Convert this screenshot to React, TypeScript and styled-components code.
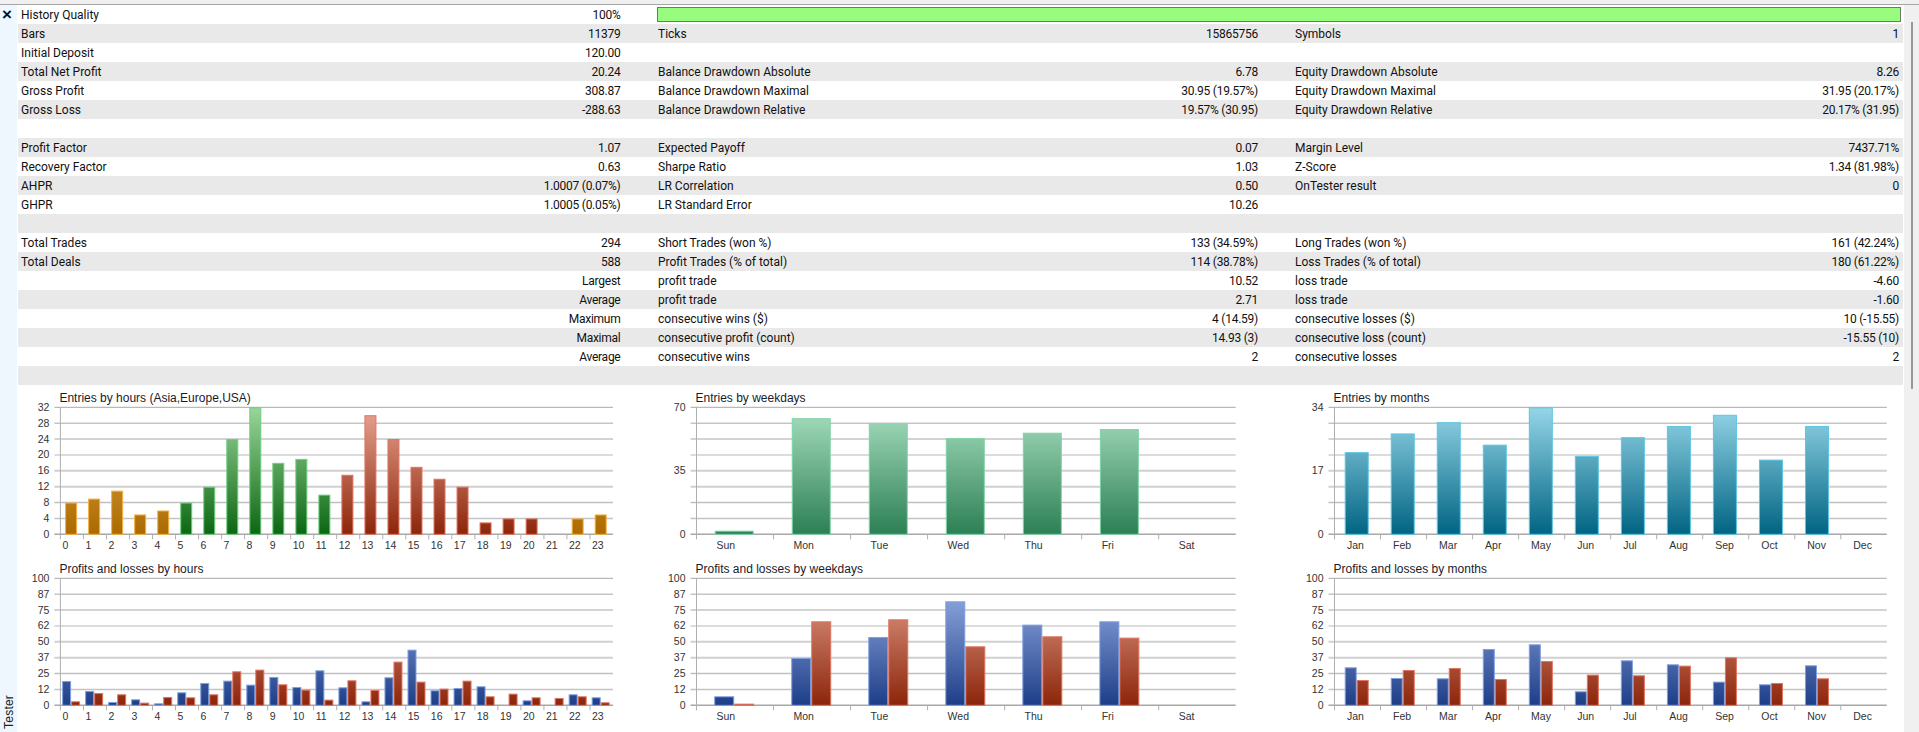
import React from "react";
import styled, { createGlobalStyle } from "styled-components";

const Global = createGlobalStyle`
  html, body { margin: 0; padding: 0; background: #fff; overflow: hidden; }
  #root { width: 1919px; height: 732px; overflow: hidden; }
`;

const Page = styled.div`
  display: flex;
  flex-direction: column;
  width: 1919px;
  height: 732px;
  overflow: hidden;
  background: #fff;
`;
const TopStrip = styled.div`
  flex: none;
  height: 4px;
  background: #f0f0f0;
  border-bottom: 1px solid #a6a6a6;
`;
const Main = styled.div`
  flex: 1;
  min-height: 0;
  display: flex;
`;
const Sidebar = styled.aside`
  flex: none;
  width: 17px;
  margin-right: 1px;
  background: #eef6fe;
  display: flex;
  flex-direction: column;
  justify-content: space-between;
  align-items: flex-start;
  padding: 3px 0 3px 0;
  box-sizing: border-box;
`;
const CloseMark = styled.span`
  font: bold 17px/14px "Liberation Sans", sans-serif;
  color: #111;
  margin-left: 2px;
`;
const SideLabel = styled.span`
  writing-mode: vertical-rl;
  transform: rotate(180deg);
  font: 12px/14px "Liberation Sans", sans-serif;
  color: #222;
  letter-spacing: 0.2px;
  margin-left: 2px;
`;
const Content = styled.main`
  flex: none;
  width: 1886px;
  display: flex;
  flex-direction: column;
`;
const Track = styled.div`
  flex: none;
  width: 15px;
  background: #f0f0f0;
  padding: 17px 0 0 7px;
  box-sizing: border-box;
`;
const Thumb = styled.div`
  width: 2px;
  height: 367px;
  background: #979797;
`;
const Table = styled.div`
  flex: none;
  width: 1885px;
`;
const Row = styled.div<{ $shade?: boolean }>`
  display: grid;
  grid-template-columns: 640px 637px 608px;
  height: 19px;
  background: ${(p) => (p.$shade ? "#e9e9e9" : "#fff")};
  font: 12px/21px Roboto, "Liberation Sans", sans-serif;
  color: #111;
`;
const Cell = styled.div<{ $left: number; $right: number }>`
  display: flex;
  justify-content: space-between;
  height: 19px;
  padding: 0 ${(p) => p.$right}px 0 ${(p) => p.$left}px;
  white-space: nowrap;
`;
const Value = styled.span`
  letter-spacing: -0.25px;
`;
const Quality = styled.div`
  grid-column: 2 / 4;
  height: 15px;
  margin: 2px 2px 0 -1px;
  box-sizing: border-box;
  background: #98fd7e;
  border: 1px solid #6b7a6b;
`;
const Charts = styled.div`
  flex: none;
  display: grid;
  grid-template-columns: 639px 638px 608px;
  grid-template-rows: 171px 176px;
`;
const Card = styled.section`
  padding-top: 6px;
  min-width: 0;
`;
const ChartTitle = styled.div<{ $x: number }>`
  padding-left: ${(p) => p.$x}px;
  font: 12px/14px "Liberation Sans", sans-serif;
  color: #1a1a2a;
  white-space: nowrap;
`;
const Plot = styled.svg`
  display: block;
  width: 100%;
  height: 151px;
  overflow: visible;
`;
const AxisText = styled.text`
  font: 10.5px "Liberation Sans", sans-serif;
  fill: #333;
`;

type C = [string, string];
const col: Record<string, C> = {
  orange: ["#e8b25a", "#ab6a00"],
  green: ["#9ad69a", "#0c6612"],
  red: ["#e8a593", "#8c250a"],
  blue: ["#9db4e8", "#1d3e88"],
  mint: ["#a8dfc0", "#2c7f54"],
  teal: ["#96d6e8", "#006483"],
};
const edge: Record<string, string> = {
  orange: "#f5b043",
  green: "#6fce7f",
  red: "#e27360",
  blue: "#7f9fe2",
  mint: "#80d4a6",
  teal: "#5cc6e2",
};

const gridStyles: [string, number][] = [
  ["#a8a8a8", 1],
  ["#a8a8a8", 1],
  ["#c4c4c4", 1.5],
  ["#dcdcdc", 2],
  ["#d0d0d0", 2],
  ["#d0d0d0", 2],
  ["#c0c0c0", 1.5],
  ["#c4c4c4", 1.5],
  ["#a8a8a8", 1.5],
];

const H = 127;
const TOP = 2.3;

type Bar = { v: number; c: string };
type ChartProps = {
  id: string;
  title: string;
  axis: number;
  width: number;
  yLabels: string[];
  xLabels: string[];
  labelOffset: number;
  barW: number;
  max: number;
  groups: Bar[][];
};

function Chart({ id, title, axis, width, yLabels, xLabels, labelOffset, barW, max, groups }: ChartProps) {
  const slot = width / xLabels.length;
  const bottom = TOP + H;
  const step = yLabels.length > 1 ? 8 / (yLabels.length - 1) : 1;
  const used = Array.from(new Set(groups.flat().map((b) => b.c)));
  return (
    <Card>
      <ChartTitle $x={axis - 1}>{title}</ChartTitle>
      <Plot>
        <defs>
          {used.map((c) => (
            <linearGradient key={c} id={`${id}-${c}`} gradientUnits="userSpaceOnUse" x1="0" x2="0" y1={TOP} y2={bottom}>
              <stop offset="0" stopColor={col[c][0]} />
              <stop offset="1" stopColor={col[c][1]} />
            </linearGradient>
          ))}
        </defs>
        {gridStyles.map(([stroke, w], i) => {
          const y = TOP + (H / 8) * i;
          return <line key={i} x1={axis - 6} x2={axis + width} y1={y} y2={y} stroke={stroke} strokeWidth={w} />;
        })}
        <line x1={axis} x2={axis} y1={TOP} y2={bottom + 5} stroke="#b0b0b0" />
        {xLabels.map((l, i) => (
          <g key={l}>
            {i > 0 && <line x1={axis + slot * i} x2={axis + slot * i} y1={bottom} y2={bottom + 5} stroke="#b0b0b0" />}
            <AxisText x={axis + slot * i + labelOffset} y={bottom + 14.5}>
              {l}
            </AxisText>
          </g>
        ))}
        {yLabels.map((l, i) => (
          <AxisText key={l} x={axis - 11} y={TOP + (H / 8) * i * step + 3.5} textAnchor="end">
            {l}
          </AxisText>
        ))}
        {groups.map((g, i) => {
          const total = g.length * barW;
          const start = axis + slot * i + slot / 2 - total / 2 - 0.8;
          return g.map((b, j) => {
            if (b.v <= 0) return null;
            const h = (b.v / max) * H;
            return (
              <rect
                key={j}
                x={start + j * barW + 0.5}
                y={bottom - h + 0.5}
                width={barW - 1}
                height={Math.max(h - 0.5, 0.5)}
                fill={`url(#${id}-${b.c})`}
                stroke={edge[b.c]}
              />
            );
          });
        })}
      </Plot>
    </Card>
  );
}

const hours = Array.from({ length: 24 }, (_, i) => String(i));
const days = ["Sun", "Mon", "Tue", "Wed", "Thu", "Fri", "Sat"];
const months = ["Jan", "Feb", "Mar", "Apr", "May", "Jun", "Jul", "Aug", "Sep", "Oct", "Nov", "Dec"];
const pct = ["100", "87", "75", "62", "50", "37", "25", "12", "0"];

const hourEntries = [8, 9, 11, 5, 6, 8, 12, 24, 32, 18, 19, 10, 15, 30, 24, 17, 14, 12, 3, 4, 4, 0, 4, 5];
const hourColor = (i: number) => (i < 5 || i > 20 ? "orange" : i < 12 ? "green" : "red");
const dayEntries = [2, 64, 61, 53, 56, 58, 0];
const monthEntries = [22, 27, 30, 24, 34, 21, 26, 29, 32, 20, 29, 0];

const toPct = (top: number) => (top >= 466 ? 0 : ((466 - top) / 381) * 100);
const pairs = (list: [number, number][]) =>
  list.map(([a, b]) => [
    { v: toPct(a), c: "blue" },
    { v: toPct(b), c: "red" },
  ]);

const hourPL: [number, number][] = [
  [393, 454], [423, 429], [456, 433], [448, 458], [460, 441], [427, 442], [399, 433], [392, 364],
  [404, 359], [381, 403], [411, 419], [361, 449], [412, 391], [454, 420], [382, 335], [299, 395],
  [421, 416], [414, 392], [409, 439], [466, 431], [451, 442], [466, 444], [433, 439], [442, 457],
];
const dayPL: [number, number][] = [
  [439, 461], [324, 214], [261, 208], [154, 289], [224, 259], [214, 263], [466, 466],
];
const monthPL: [number, number][] = [
  [352, 390], [384, 360], [385, 354], [297, 387], [283, 333], [424, 374],
  [331, 376], [343, 347], [395, 322], [403, 399], [346, 385], [466, 466],
];

type RowData = [string, string, string?, string?, string?, string?];
const rows: RowData[] = [
  ["History Quality", "100%"],
  ["Bars", "11379", "Ticks", "15865756", "Symbols", "1"],
  ["Initial Deposit", "120.00"],
  ["Total Net Profit", "20.24", "Balance Drawdown Absolute", "6.78", "Equity Drawdown Absolute", "8.26"],
  ["Gross Profit", "308.87", "Balance Drawdown Maximal", "30.95 (19.57%)", "Equity Drawdown Maximal", "31.95 (20.17%)"],
  ["Gross Loss", "-288.63", "Balance Drawdown Relative", "19.57% (30.95)", "Equity Drawdown Relative", "20.17% (31.95)"],
  ["", ""],
  ["Profit Factor", "1.07", "Expected Payoff", "0.07", "Margin Level", "7437.71%"],
  ["Recovery Factor", "0.63", "Sharpe Ratio", "1.03", "Z-Score", "1.34 (81.98%)"],
  ["AHPR", "1.0007 (0.07%)", "LR Correlation", "0.50", "OnTester result", "0"],
  ["GHPR", "1.0005 (0.05%)", "LR Standard Error", "10.26"],
  ["", ""],
  ["Total Trades", "294", "Short Trades (won %)", "133 (34.59%)", "Long Trades (won %)", "161 (42.24%)"],
  ["Total Deals", "588", "Profit Trades (% of total)", "114 (38.78%)", "Loss Trades (% of total)", "180 (61.22%)"],
  ["", "Largest", "profit trade", "10.52", "loss trade", "-4.60"],
  ["", "Average", "profit trade", "2.71", "loss trade", "-1.60"],
  ["", "Maximum", "consecutive wins ($)", "4 (14.59)", "consecutive losses ($)", "10 (-15.55)"],
  ["", "Maximal", "consecutive profit (count)", "14.93 (3)", "consecutive loss (count)", "-15.55 (10)"],
  ["", "Average", "consecutive wins", "2", "consecutive losses", "2"],
  ["", ""],
];

export default function App() {
  return (
    <Page>
      <Global />
      <TopStrip />
      <Main>
        <Sidebar>
          <CloseMark>×</CloseMark>
          <SideLabel>Tester</SideLabel>
        </Sidebar>
        <Content>
          <Table>
            {rows.map((r, i) => (
              <Row key={i} $shade={i % 2 === 1}>
                <Cell $left={3} $right={37.5}>
                  <span>{r[0]}</span>
                  <Value>{r[1]}</Value>
                </Cell>
                {i === 0 ? (
                  <Quality />
                ) : (
                  <>
                    <Cell $left={0} $right={37}>
                      <span>{r[2]}</span>
                      <Value>{r[3]}</Value>
                    </Cell>
                    <Cell $left={0} $right={4}>
                      <span>{r[4]}</span>
                      <Value>{r[5]}</Value>
                    </Cell>
                  </>
                )}
              </Row>
            ))}
          </Table>
          <Charts>
            <Chart
              id="a"
              title="Entries by hours (Asia,Europe,USA)"
              axis={42.4}
              width={552.6}
              yLabels={["32", "28", "24", "20", "16", "12", "8", "4", "0"]}
              xLabels={hours}
              labelOffset={2}
              barW={12}
              max={32}
              groups={hourEntries.map((v, i) => [{ v, c: hourColor(i) }])}
            />
            <Chart
              id="b"
              title="Entries by weekdays"
              axis={39.5}
              width={539.2}
              yLabels={["70", "35", "0"]}
              xLabels={days}
              labelOffset={20}
              barW={39}
              max={70}
              groups={dayEntries.map((v) => [{ v, c: "mint" }])}
            />
            <Chart
              id="c"
              title="Entries by months"
              axis={39.5}
              width={552.3}
              yLabels={["34", "17", "0"]}
              xLabels={months}
              labelOffset={12.5}
              barW={24}
              max={34}
              groups={monthEntries.map((v) => [{ v, c: "teal" }])}
            />
            <Chart
              id="d"
              title="Profits and losses by hours"
              axis={42.4}
              width={552.6}
              yLabels={pct}
              xLabels={hours}
              labelOffset={2}
              barW={9}
              max={100}
              groups={pairs(hourPL)}
            />
            <Chart
              id="e"
              title="Profits and losses by weekdays"
              axis={39.5}
              width={539.2}
              yLabels={pct}
              xLabels={days}
              labelOffset={20}
              barW={20}
              max={100}
              groups={pairs(dayPL)}
            />
            <Chart
              id="f"
              title="Profits and losses by months"
              axis={39.5}
              width={552.3}
              yLabels={pct}
              xLabels={months}
              labelOffset={12.5}
              barW={12}
              max={100}
              groups={pairs(monthPL)}
            />
          </Charts>
        </Content>
        <Track>
          <Thumb />
        </Track>
      </Main>
    </Page>
  );
}
